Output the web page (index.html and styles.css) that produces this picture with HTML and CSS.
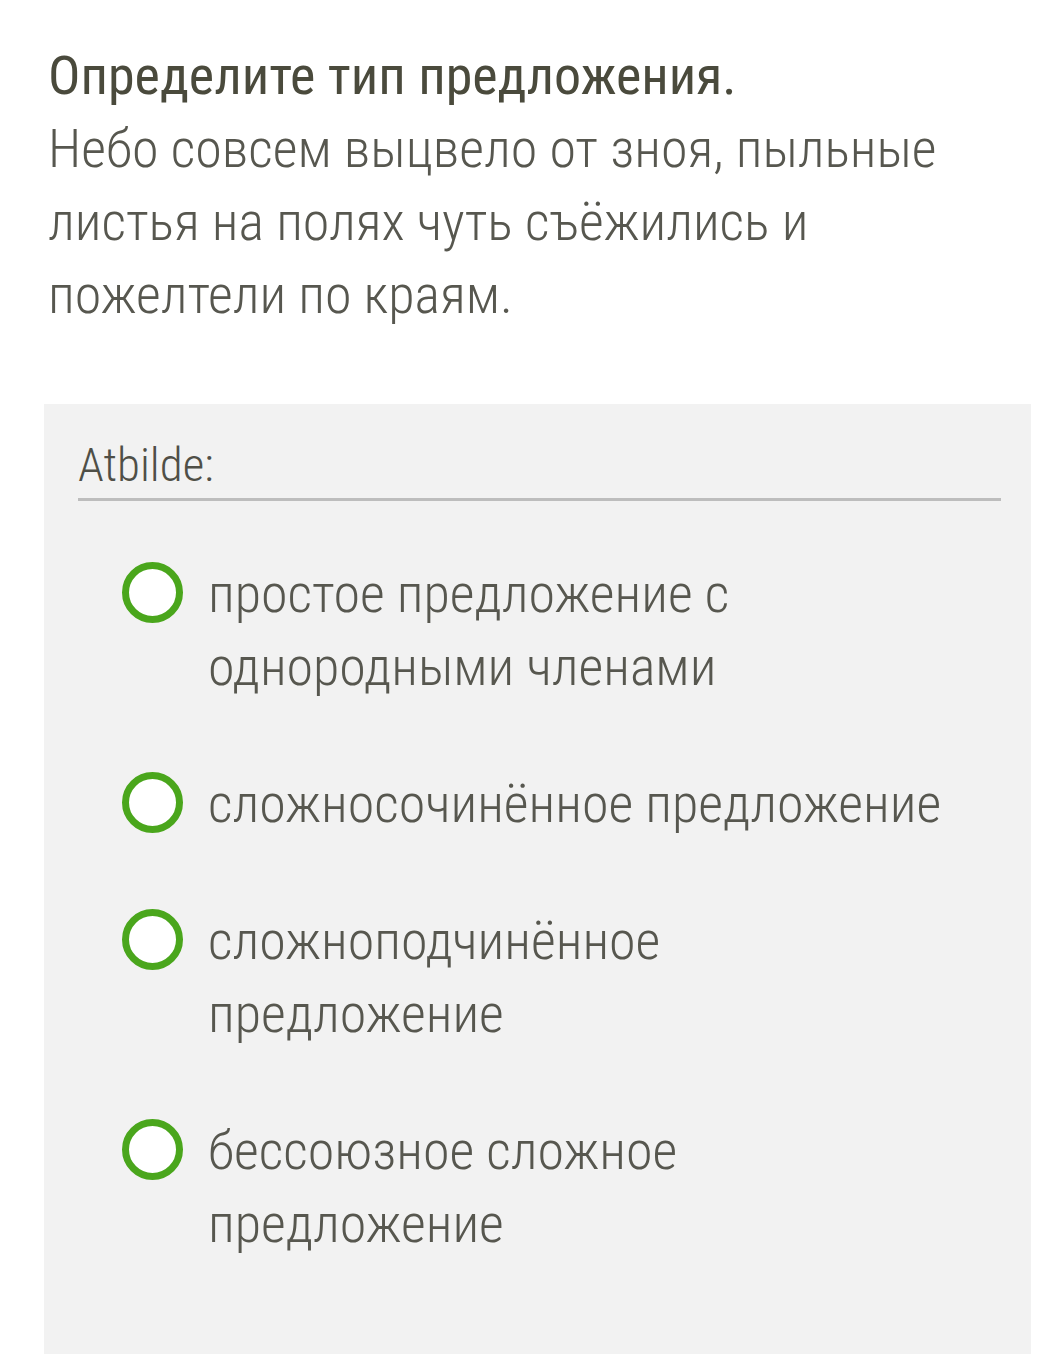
FILE: index.html
```html
<!DOCTYPE html>
<html lang="ru">
<head>
<meta charset="utf-8">
<link rel="stylesheet" href="styles.css">
</head>
<body>
<div class="question">
  <div class="qtext">
    <div class="qtitle">Определите тип предложения.</div>
    <div class="qbody">Небо совсем выцвело от зноя, пыльные листья на полях чуть съёжились и пожелтели по краям.</div>
  </div>
  <div class="answerbox">
    <div class="prompt">Atbilde:</div>
    <div class="options">
      <label class="option"><span class="radio"></span><span class="otext">простое предложение с однородными членами</span></label>
      <label class="option"><span class="radio"></span><span class="otext">сложносочинённое предложение</span></label>
      <label class="option"><span class="radio"></span><span class="otext">сложноподчинённое предложение</span></label>
      <label class="option"><span class="radio"></span><span class="otext">бессоюзное сложное предложение</span></label>
    </div>
  </div>
</div>
</body>
</html>
```
FILE: styles.css
```css
html, body {
  margin: 0;
  padding: 0;
  background: #ffffff;
}
body {
  font-family: Roboto, "Noto Sans", sans-serif;
  font-stretch: 75%;
  color: #57574f;
}
.question {
  display: flex;
  flex-direction: column;
  height: 100vh;
}
.qtext {
  padding: 39px 40px 0 48px;
  font-size: 54px;
  line-height: 73px;
}
.qtitle {
  font-weight: 450;
  color: #4a4a3c;
}
.qbody {
  font-weight: 300;
  max-width: 920px;
}
.answerbox {
  flex: 1;
  margin: 73px 15px 0 44px;
  background: #f2f2f2;
  padding: 30px 30px 0 34px;
}
.prompt {
  font-size: 47px;
  font-weight: 300;
  line-height: 62px;
  color: #4f4f47;
  padding-bottom: 2px;
  border-bottom: 3px solid #bdbdbd;
}
.options {
  display: flex;
  flex-direction: column;
  gap: 64px;
  padding: 56px 0 0 44px;
}
.option {
  display: flex;
  align-items: flex-start;
  gap: 25px;
}
.radio {
  flex: none;
  width: 47px;
  height: 47px;
  border: 7px solid #4aa61c;
  border-radius: 50%;
  background: #ffffff;
  margin-top: 5px;
}
.otext {
  font-size: 54px;
  font-weight: 300;
  line-height: 73px;
  width: 745px;
}
```
